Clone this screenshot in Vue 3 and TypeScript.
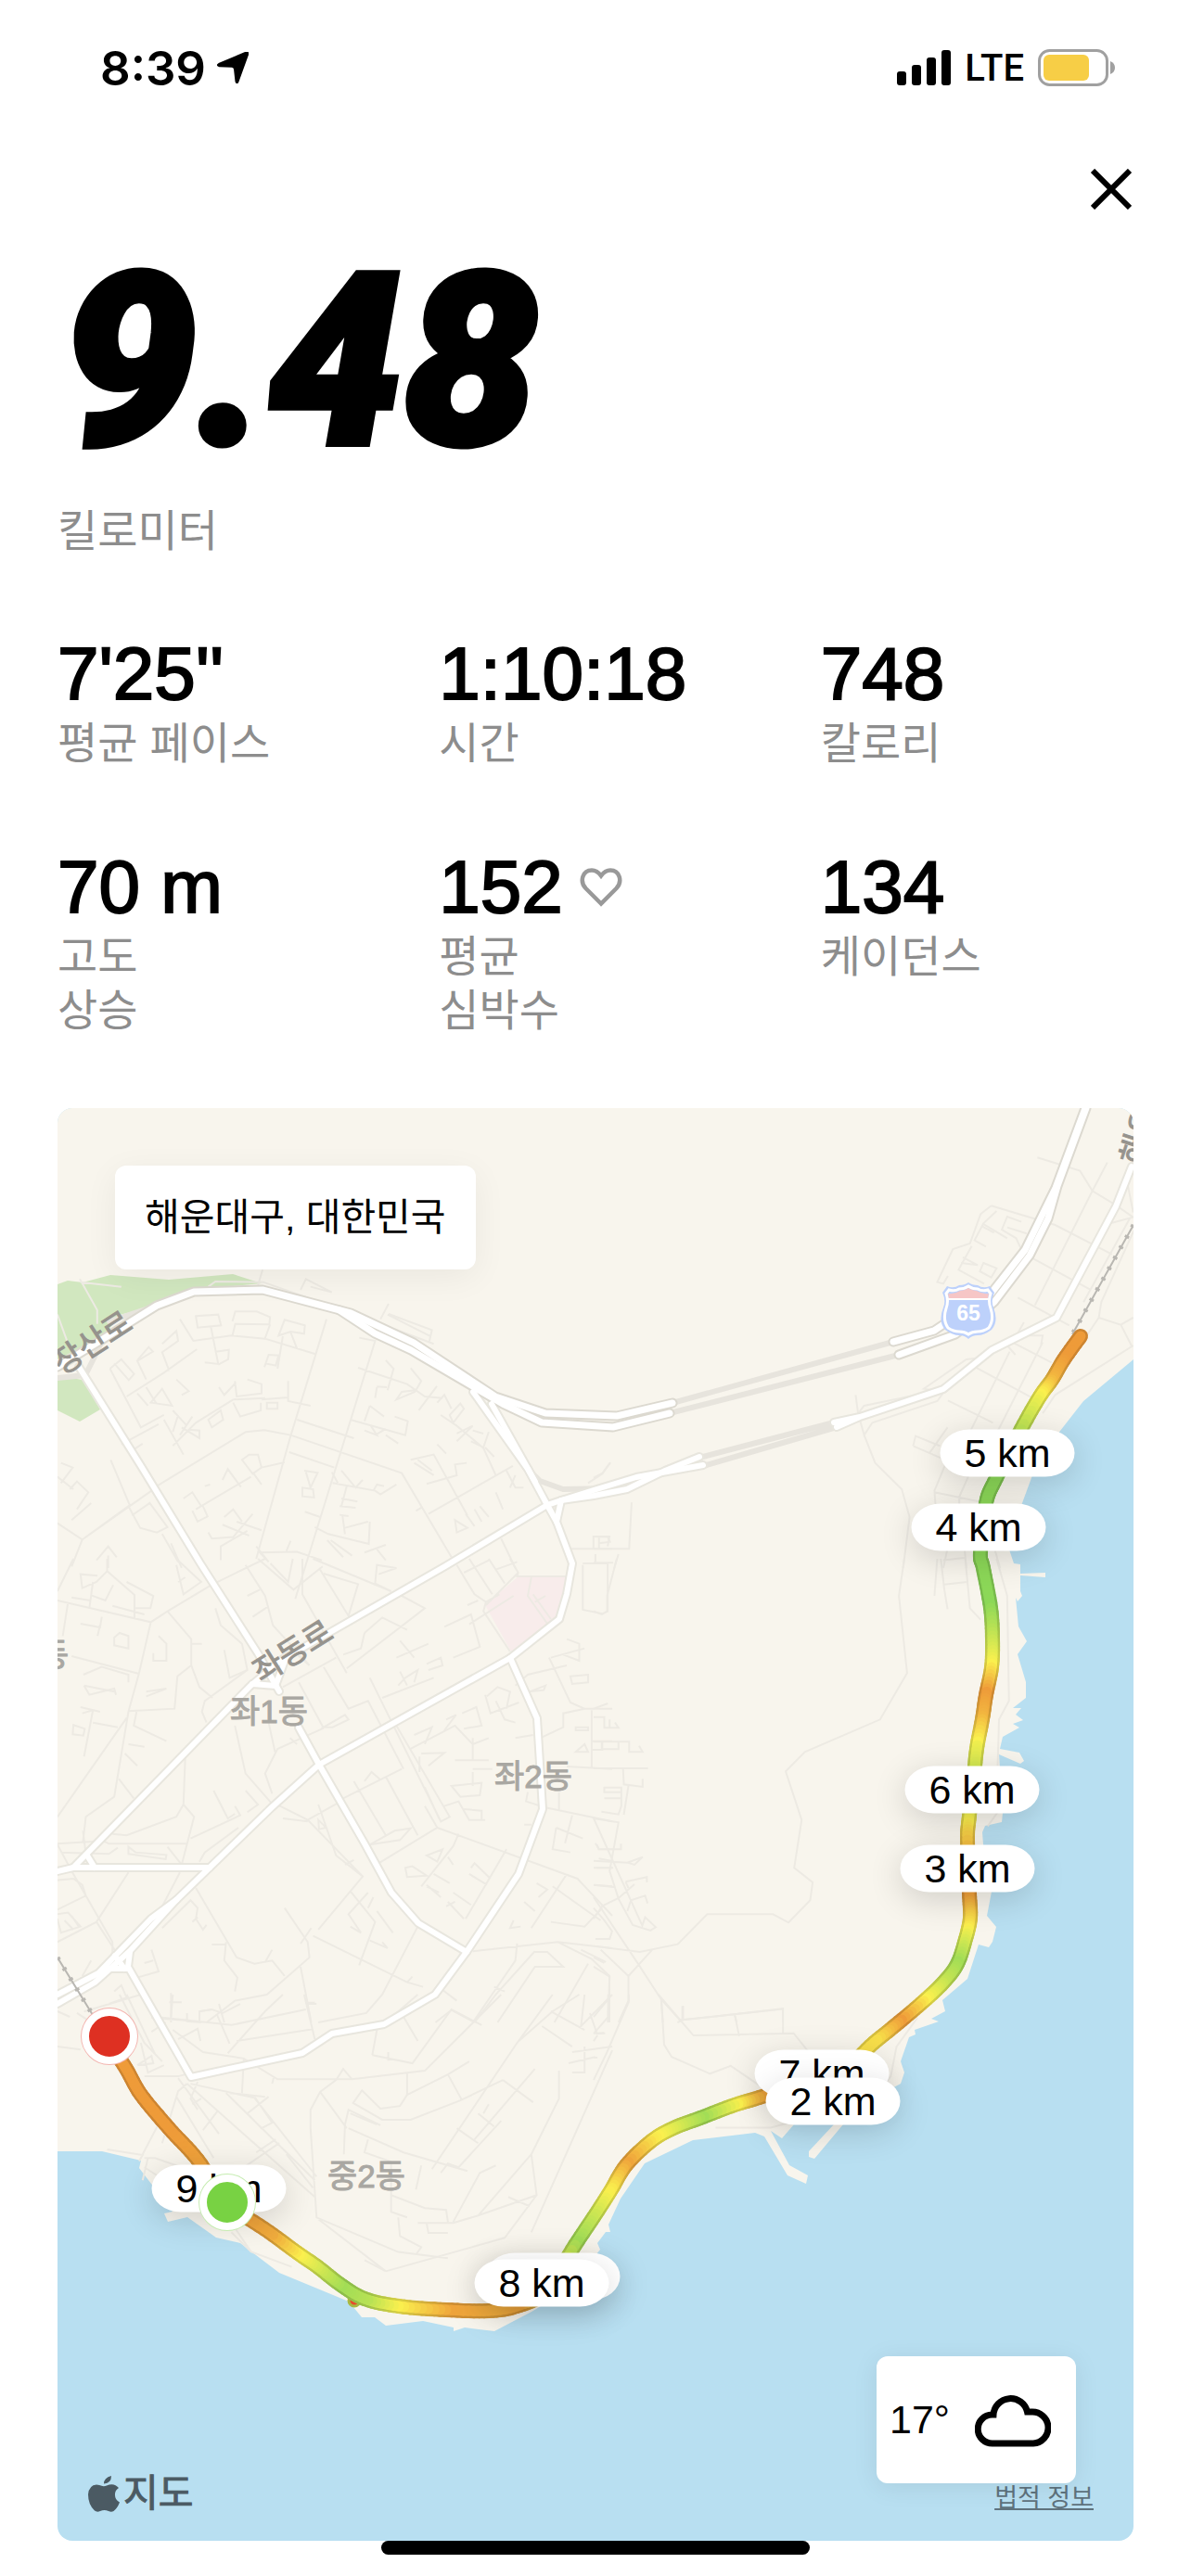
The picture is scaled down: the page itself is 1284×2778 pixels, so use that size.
<script setup lang="ts">
interface Stat {
  value: string
  label: string
  heart?: boolean
}

interface Pin {
  label: string
  x: number
  y: number
}

const stats: Stat[] = [
  { value: "7'25''", label: '평균 페이스' },
  { value: '1:10:18', label: '시간' },
  { value: '748', label: '칼로리' },
  { value: '70 m', label: '고도\n상승' },
  { value: '152', label: '평균\n심박수', heart: true },
  { value: '134', label: '케이던스' },
]

// The map's own coordinate window
const view = { x: 62, y: 1194, w: 1160, h: 1545 }

const pins: Pin[] = [
  { label: '5 km', x: 1086, y: 1566 },
  { label: '4 km', x: 1055, y: 1646 },
  { label: '6 km', x: 1048, y: 1929 },
  { label: '3 km', x: 1043, y: 2014 },
  { label: '7 km', x: 886, y: 2235 },
  { label: '2 km', x: 898, y: 2265 },
  { label: '1 km', x: 596, y: 2454 },
  { label: '8 km', x: 584, y: 2461 },
  { label: '9 km', x: 236, y: 2359 },
]

function place(x: number, y: number) {
  return {
    left: `${((x - view.x) / view.w) * 100}%`,
    top: `${((y - view.y) / view.h) * 100}%`,
  }
}

// Route vertices: x, y, speed (0 slow, 1 medium, 2 fast)
const track: [number, number, number][] = [
  [1165, 1440, 0], [1147, 1465, 0], [1134, 1487, 0.3], [1121, 1505, 1], [1101, 1540, 1.5],
  [1074, 1593, 2], [1063, 1620, 2], [1057, 1673, 2], [1060, 1690, 2], [1068, 1733, 2],
  [1070, 1767, 1.5], [1069, 1797, 1], [1063, 1827, 0], [1059, 1853, 0.3], [1053, 1885, 1.1],
  [1050, 1915, 1.4], [1045, 1957, 1.2], [1043, 1983, 0.6], [1045, 2040, -0.1], [1046, 2067, 0.6],
  [1041, 2090, 1.2], [1032, 2117, 1.8], [1017, 2137, 1.5], [996, 2157, 1], [969, 2180, 0],
  [942, 2202, 0.8], [903, 2234, 0.8], [825, 2259, 0], [792, 2269, 1], [755, 2283, 1.8],
  [726, 2294, 1.3], [702, 2308, 0.9], [675, 2334, 0.1], [658, 2362, 0.9], [640, 2390, 1.4],
  [620, 2420, 1.8], [588, 2470, 0.8], [557, 2486, 0.1], [527, 2491, 0.2], [481, 2490, 0.1],
  [430, 2486, 0.9], [393, 2478, 1.6], [366, 2462, 1.8], [343, 2444, 1.4], [320, 2428, 1],
  [290, 2406, 0.2], [245, 2374, 0], [213, 2328, 0.1], [182, 2294, 0], [152, 2258, 0],
  [136, 2230, 0], [118, 2202, 0],
]

const ramp = [
  [238, 155, 57],
  [250, 240, 78],
  [140, 216, 88],
]

function speedColor(t: number, shade: number): string {
  const v = Math.min(2, Math.max(0, t))
  const i = Math.min(1, Math.floor(v))
  const f = v - i
  const c = ramp[i].map((a, k) => Math.round((a + (ramp[i + 1][k] - a) * f) * shade))
  return `rgb(${c.join(',')})`
}

function spline(a: number, b: number, c: number, d: number, t: number): number {
  return 0.5 * (2 * b + (c - a) * t + (2 * a - 5 * b + 4 * c - d) * t * t + (3 * b - a - 3 * c + d) * t * t * t)
}

const steps = 8
const points: [number, number, number][] = []
for (let i = 0; i < track.length - 1; i++) {
  const p0 = track[Math.max(0, i - 1)]
  const p1 = track[i]
  const p2 = track[i + 1]
  const p3 = track[Math.min(track.length - 1, i + 2)]
  for (let s = 0; s < steps; s++) {
    const t = s / steps
    points.push([
      spline(p0[0], p1[0], p2[0], p3[0], t),
      spline(p0[1], p1[1], p2[1], p3[1], t),
      p1[2] + (p2[2] - p1[2]) * t,
    ])
  }
}
points.push(track[track.length - 1])

const segments = points.slice(1).map((p, i) => ({
  x1: points[i][0].toFixed(1),
  y1: points[i][1].toFixed(1),
  x2: p[0].toFixed(1),
  y2: p[1].toFixed(1),
  core: speedColor(p[2], 1),
  edge: speedColor(p[2], 0.86),
}))

const coast =
  'M62 1194H1222V1465L1168 1510 1143 1542 1113 1590 1102 1620 1088 1670 1093 1685 1100 1686V1696L1127 1695V1700L1100 1698V1715L1102 1720 1097 1726 1095 1722 1098 1753 1107 1769 1097 1783 1106 1813V1830L1092 1841H1101L1095 1848 1103 1854 1092 1858 1099 1862 1081 1872 1078 1885 1099 1889 1104 1898 1100 1901 1077 1891 1081 1954 1080 1964 1062 1968 1059 1975 1060 1988 1069 2039 1064 2065 1074 2077 1070 2093 1066 2099 1055 2096 1043 2133 1016 2156 1019 2168 1004 2176 1012 2179 986 2188 987 2193 980 2196 971 2222 975 2234 971 2246 927 2270 909 2290 878 2327 872 2325V2319L899 2290 882 2280 856 2290 843 2305 831 2297 851 2334 871 2345 869 2354 849 2345 824 2303 814 2299 747 2307 695 2332 669 2370 656 2398 658 2406H653L644 2418 647 2425 610 2470 573 2492 533 2513 501 2509 489 2513V2509L456 2502 416 2507 404 2498H390L376 2481 301 2450 259 2418 233 2412 202 2390 181 2395 177 2386 186 2384 150 2337 152 2329 110 2319H62Z'

const tunnels = [
  'M725 1512L963 1446M722 1523L969 1460M899 1533L754 1571M902 1538L758 1580',
  'M573 1587L582 1596 607 1605 660 1604',
  'M62 1485L92 1482 104 1458 112 1440M118 1424L169 1407',
]

const highways = [
  'M62 1473L129 1432 169 1407 209 1392 283 1390 378 1415 446 1447 534 1505 588 1523 665 1526 725 1512',
  'M366 1412L404 1437 443 1455 542 1513 584 1533 661 1538 722 1523',
  'M963 1446L1007 1434 1040 1412 1069 1393 1105 1347 1138 1280 1170 1194',
  'M969 1460L1030 1438 1053 1420 1072 1403 1110 1353 1130 1313 1140 1278 1171 1194',
]

const roads = [
  'M1220 1257L1203 1300 1139 1420 1069 1455 1017 1497 927 1527 899 1533M927 1527L902 1538',
  'M754 1570L717 1585 676 1605 640 1612 605 1617 590 1622 480 1688 351 1762 305 1788 270 1817 79 2013 62 2017',
  'M758 1579L686 1592 640 1606 605 1617',
  'M85 1473L152 1580 216 1685 278 1782 301 1823M322 1862L344 1902 393 1987 422 2040 451 2073 503 2104',
  'M272 1815L297 1817 307 1790M94 2000L102 2013M79 2013H226',
  'M510 1500L569 1583 590 1622 600 1640 617 1685 611 1718 603 1745 550 1787 344 1902 293 1948 226 2013 190 2048 140 2103 102 2137 62 2160',
  'M530 1513L577 1597M605 1617L600 1640M190 2048L163 2068 106 2127 62 2150',
  'M550 1787L579 1852 585 1950 559 2020 503 2104 469 2150 414 2182 358 2192 326 2213 206 2239 138 2120 140 2104M118 2122H138M124 2108L134 2122',
]

// Side streets, drawn tile by tile; each tile has its own origin and scale
const tiles = [
  {
    transform: 'translate(60 1190) scale(.3827 .3333)',
    d: 'M153 855L185 825 221 872 206 892 165 838M153 855L240 1045 305 1005M200 945L305 868 398 792M350 695L388 765 495 748 590 758 732 808M395 685L458 680 466 715 400 722ZM437 718L458 840 420 835M450 800L488 794 486 825 458 842M498 702L506 670 566 670 604 688 602 712 506 710 498 748M604 712L590 756M628 748L645 697 702 715 700 742 662 735ZM662 738L680 790M300 775L340 733 345 765 300 802 320 862M230 828L262 785 274 800 230 830 255 890M763 695L660 1080 565 1470M855 755L900 765 675 1600M852 852L990 905 1040 945 1090 950M930 828L952 855 935 925M1000 853L1030 895 1012 930 960 955 975 930 1012 925M905 913L933 915M905 915L900 950M1074 912L1023 990M640 750L625 855M588 850L600 810 628 812 620 845 590 838M540 890L580 905V935L510 945 505 895M460 915L475 940 508 900M655 895V960L718 975M580 955L655 948M500 955L395 1030 330 1105M500 955L590 950M500 965L520 1010 578 990V965M595 965H625V985H595ZM430 1020L465 990 472 1020 440 1045ZM330 990L370 1040M345 1005L330 1060M385 1010L350 1070M355 1045L405 1080V1055L375 1052M305 1020L360 1133M230 935L260 975M255 915L285 970M300 920L328 975 268 965ZM340 890L375 928 355 940M185 1100L290 1035M222 1115L245 1098M285 1235L535 1060 588 1054 662 1070 975 1193 1115 1465M658 1125L785 1175M680 1020L840 1080M830 1020L985 1070 992 1025 955 1010M870 1055L905 1070 888 1040M900 1070L930 1050M885 975L870 1025M885 975L925 1010M965 1097L930 1070M1075 965L1095 940 1115 985M1110 1005L1140 968 1150 985 1120 1030ZM1085 1005L1130 1040 1205 1112 1240 1200M1130 1065L1175 1040 1130 1090M1205 1065L1175 1055M1210 1110L1235 1140M1000 1150L1065 1133 1160 1330M1010 1160L1065 1200M1020 1150L1060 1185M1075 1100L1100 1130M1045 1228L1130 1200 1125 1165 1158 1160M1050 1325L1288 1170M1270 1185L1295 1240H1318M1280 1240L1295 1200M1015 1315L1030 1305M1125 1345L1130 1385 1160 1370ZM1155 1325L1180 1365M1180 1310L1200 1350M1195 1300L1220 1335M1240 1255L1260 1310M525 1150L545 1133H570L580 1175 555 1195ZM555 1190L580 1230M580 1175L645 1158M470 1215L485 1180 522 1238M360 1275L385 1255 410 1300M395 1310L550 1205M385 1315L400 1350 428 1333 415 1300M420 1235L435 1230M700 1185L738 1192 718 1240 705 1190M695 1268V1240L725 1245 728 1272ZM780 1225L900 1250 915 1262 960 1230M778 1190L795 1225M805 1185L845 1240 865 1215M895 1250L905 1230 925 1235M820 1235L805 1300M805 1275L850 1285M800 1300L845 1305M702 1318L745 1335M800 1328L825 1332M808 1330L815 1390M815 1370L880 1350M730 1368L768 1390 882 1422 885 1350M765 1410L810 1465M775 1410L835 1460M870 1450L930 1425M905 1440L930 1475M430 1385L440 1405 500 1400 555 1325M470 1360L545 1395M475 1335L500 1310 525 1350M510 1350L580 1378M465 1475V1430L540 1380M5 1355L75 1408 270 1250M45 1495L75 1408 205 1300 238 1370 285 1385 315 1368 265 1290 215 1330M155 1150L210 1300M15 1160L48 1175 15 1225M5 1205L50 1245M40 1245L60 1220 92 1255 60 1310M45 1345L100 1290M115 1475L148 1430 172 1465M148 1460V1500M300 1390L345 1480M325 1420L355 1500M565 1430L600 1480 575 1450 680 1448 750 1475M650 1445L662 1412M430 590L450 573 585 575 870 690 1065 775M583 535L570 585M690 600L705 565 778 608 718 590M938 645L915 695M938 678L1060 730 1052 770M935 680L1055 750M68 565L117 665V710M70 575L185 590M5 680L40 790M1255 1405L1295 1500M1450 1438H1568M1515 1438V1398H1560L1555 1430M1500 1225L1540 1195 1562 1160M1220 1060L1205 1110 1170 1090',
  },
  {
    transform: 'translate(640 1190) scale(.3827 .3333)',
    d: 'M1250 172L1370 215 1405 280 1470 325 1520 365M1447 188L1405 280 1243 650M1195 625L1340 715M1120 328L1300 390 1460 485M1120 328L1090 355 1060 450 1012 468 968 575 985 580 998 555M1135 345L1098 385 1073 440 1105 460M1095 385L1165 433M1095 395L1128 415M1205 380L1165 363 1150 405 1190 433 1205 470M1165 398L1220 418M1065 458L1028 535 1100 580M1040 495L1082 520 1035 513M1098 513L1135 530 1120 560 1088 540ZM1235 497L1400 600M1505 262L1520 350M1455 385L1520 365M1525 400L1430 640 1423 690 1300 900M1510 370L1380 640M1423 690L1485 713 1520 690M1485 713L1515 780M1520 780L1300 940 1265 1000M1180 770L1290 835M1165 780L1188 810M1212 705L1190 750M1200 748H1265L1260 780M1075 850L1245 955M1172 800L1043 1100M1265 770L1115 1110M998 958L1125 1030M985 930L930 920 1050 825 1090 820M990 925L968 960 785 1030 762 1070 745 1000 762 975 930 935M738 940L745 1000M762 1070L793 1160 868 1245 890 1335 872 1500M900 1105L907 1073 975 1105M900 1105L980 1145M997 1045L945 1130M1000 1140L960 1250 970 1400M960 1255L1085 1285M1080 1140L1030 1270V1330M1000 1420L985 1500M1045 1440L1050 1500M985 1475L1045 1467M1130 1440L1145 1500M107 1288L100 1438H0M0 1398L40 1400 46 1415 15 1420M15 1398V1438M70 1455L58 1500M5 1455V1483M0 1483H55M0 1208L25 1193 47 1158',
  },
  {
    transform: 'translate(60 1680) scale(.3827 .3333)',
    d: 'M5 105L50 0M5 135L268 205 315 170 438 85 590 0M35 140L20 250M268 205L235 370 205 495 165 770 85 835 77 915M5 835L200 515M145 0V40L222 117V195M145 40L115 75 75 95 70 50 118 55M95 160L105 75M45 125L98 135M100 118L140 135 162 85M200 75L275 120 267 160H222M160 152L250 180M70 210L125 222 130 188M125 215L118 250M165 255L180 240 205 250V290L165 280ZM45 315L235 372M78 375L130 350 205 375V400M80 410L95 440 165 420 170 440M80 410L165 430M255 430L312 420 255 445M70 480L125 495M75 500L105 490 80 640M105 530L175 545M50 538L82 550 78 572 48 568ZM205 600L250 608M205 493L335 485 343 380 382 345 405 415 442 450M382 345V260L315 170M382 275H412M290 250L312 275V330H275V305M228 495L220 540 312 590M195 630L230 670M178 712L220 775M160 890L200 895 340 835 360 795 390 835 355 990M365 645L360 795M5 922L135 913 150 922H372M77 880L85 955M205 932V955L310 972 312 958 225 950ZM340 0L410 75 360 115 340 20M345 75L365 60M535 20L590 120 612 215 715 345M540 120L575 100M555 188L598 155M450 160L465 215 525 275 540 360 490 385 475 295M540 360L420 460 412 495 425 530M570 0L670 100 752 25M605 15L655 75 668 0M695 0V115L820 370M755 48L852 82 825 185 745 35M725 0L945 105 900 80 905 20 960 30 910 50M975 120L1040 160 820 355M970 265L1010 320M870 240L920 190 990 230M870 240L860 290 810 310M1095 220L1170 180 1195 285 1120 320M1165 212L1290 120M960 320L1050 275M1160 150L1190 135M1130 20L1180 115 1212 140 1250 115M1150 45L1220 5M1165 0L1230 115M1240 35L1300 10M1220 0L1265 80M1280 0L1303 45 1300 57H1438M1212 140L1205 170 1280 300M1212 150L1303 45M1340 60L1330 120 1385 210M1345 115L1395 195M1350 140L1380 120M1485 20V165L1540 178 1555 170V15H1485M640 415L790 320M660 290L715 345M755 350L825 485 880 460 980 680M885 385L1085 850 1110 835 960 540M685 400L755 548M755 545L815 505 825 520 780 545ZM755 548L625 615 590 695 610 760M505 540L535 695 615 800M600 530L618 625M660 580L680 600M870 720L890 690 915 715M810 775L975 680M840 720L930 895M930 705L1020 895M885 925L955 880 1000 872 970 910ZM910 985L1075 870 1040 800M740 795L790 960 862 1025M615 790L710 845 865 1028 740 1200M640 840L710 850M710 845L795 790M740 845L762 870 742 875ZM815 990L840 975M920 450L1065 385M965 410L985 385 1020 360 1010 400M970 365L990 410M1045 340L1085 320 1090 345 1050 360M1000 615L1125 540 1175 600 1220 580M1100 520L1128 505 1095 555M1150 550L1200 540 1185 480 1145 500M1175 580V650M1040 600L1060 545 1010 570M1030 630L1095 628 1050 670M1025 690V640M1125 652H1220M1115 735L1200 725 1195 765 1140 770ZM1175 690V735M1175 680H1230M1095 800L1135 785 1165 845H1210M1150 810L1200 815V845M1040 740L1080 840M1075 870L1470 1035 1568 1155M1135 890L1120 930 1030 1060M1270 940L1155 1165M1045 960L1090 940 1075 980ZM1105 965L1120 990M985 1000L1005 995 1045 1025 990 1030ZM1065 1020L1110 1050M1045 1055L1085 1095M1045 1060L1080 1080M1170 1000L1180 985 1225 1035M1165 1020L1215 1055M1120 1080L1170 1120M1105 1110L1150 1165M1100 1125L1125 1110M1215 445L1245 415 1280 430 1270 485M1210 440L1225 500 1305 465M1240 460L1265 520 1295 530M1295 580L1345 570M1295 410L1330 375 1440 345M1395 320L1490 290M1390 320L1450 465 1490 485H1568M1440 260L1475 275V330L1430 310M1450 380L1500 375V400L1455 405ZM1335 430L1380 410 1375 425ZM1365 580L1430 545V500L1490 485M1510 490V675M1465 545H1500V555H1465ZM1465 625L1490 600 1500 625ZM1510 590H1568M1510 618H1540V590M1440 672L1568 680M1380 805L1568 850M1330 755L1325 785 1380 805M1418 755V815M1410 870L1400 940 1450 950M1410 870L1485 905M1320 860H1340M1455 830L1435 920M1525 925L1530 940H1568M1530 970L1568 978M1525 1000H1568M1520 1055L1568 1060M1440 1020L1340 1195M1355 1050L1385 1070 1360 1095M1320 1110L1350 1140M1290 1170L1280 1195 1310 1190M1400 1060L1535 1170M1395 1175L1490 1190 1540 1130M1175 1270L1415 1240 1568 1260M1415 1240L1510 1295 1560 1350V1500M1300 1245L1295 1300 1175 1500M1235 1385L1265 1400M1350 1270L1240 1410 1180 1500M1350 1272H1385L1430 1320 1350 1320 1245 1500M1480 1265L1550 1305M1500 1310L1405 1500M1090 1395L1130 1430M1020 1190L920 1410 875 1470 740 1500M725 1220L990 1370 1035 1385M990 1370L1005 1352M645 1130L710 1240 715 1290 595 1410 505 1430 425 1500M720 1195L690 1245M690 1320L720 1500M710 1440H735M405 1500V1465L440 1458M830 1075L900 1175 855 1315M830 1190L860 1210 825 1150 880 1080M905 1140L950 1210M885 1235L935 1260 920 1240M880 1130L895 1095M395 1065L510 1290 560 1310 610 1300 645 1350M480 1240L475 1300 512 1355 505 1400M440 1248H480M590 1305L610 1265M300 1195L380 1105 400 1130 395 1165 415 1200 425 1185M385 1175L400 1160M5 1240L115 1175 205 1015M45 1010L160 1240V1280M115 1175L180 1290M5 1150L35 1145 70 1190 15 1210 5 1165M25 1170L50 1200M45 1155L65 1190M5 1040L50 1035 75 1055 85 1090 5 1135M350 1015L275 1180M405 980L420 950 515 870M380 905L520 830 505 800M445 750L485 840 505 825M535 750L570 795 540 820M5 925L45 1010M15 950L150 955 175 935M315 932L355 990M230 1355L290 1335 270 1265M250 1308L275 1300M165 1400L185 1380 200 1420 150 1440M80 1465L240 1410M325 1405V1500M320 1435H355M460 1440L475 1500M270 1485L380 1495M60 1470L100 1500M75 1350L100 1300M1070 1500L1115 1460 1180 1500',
  },
  {
    transform: 'translate(640 1680) scale(.3827 .3333)',
    d: 'M875 0L860 120 883 370 807 520 595 625 541 688 586 845 565 1000 617 1047 610 1105 549 1177 505 1150H320L237 1247 130 1272 0 1253M968 0L960 120M978 0L988 100 997 163M1047 0L1060 160 1090 197M988 83L1052 75M1135 0L1165 120 1170 460 1142 520 1138 670M65 0L38 120V170L23 180 0 170M0 485L40 468M0 512H30V547H70L60 530M45 520V547M0 592H100V625H138L128 605M23 592V616H70V595M0 678H153M83 680L85 730 138 738V712M98 735L85 828M30 740H78V755H30ZM78 755V800L70 827 22 818M30 775H78M0 840L70 853 45 1010 70 1100 110 1185 160 1203 175 1192 145 1160 137 1187ZM5 920L15 940H77V922M0 977L95 983 138 965 115 990 95 983M0 1000H55M0 1055L62 1063M70 1098L25 1123 0 1165M70 1098L115 1053M90 1045L98 1065M90 1045L150 1030V1047M95 1140L105 1105 145 1090 152 1115M0 1095L125 1310 190 1425 245 1495M0 1130L30 1170 52 1205 45 1230H5M20 1265L98 1350 165 1265M98 1350V1430L70 1500M0 1320L45 1352 40 1500M0 1290L30 1308M190 1425L195 1500M240 1493L533 1457V1500M250 1447V1493M397 1475L403 1500M1110 865L1138 820',
  },
  {
    transform: 'translate(60 2150) scale(.3827 .4005)',
    d: 'M300 62L495 82 705 40M270 100L310 75M345 120L400 92 408 125M330 95L415 155 530 172 625 228H835L1040 205 1255 0M455 55L490 132M510 125L725 93M485 158L590 45 640 0M700 0L730 120M705 22H730M892 163L905 95 1020 0M892 163L1005 185 1115 40 1200 82M980 60L1020 125M937 155V178M835 228L810 200 790 230 745 262 718 310V360L735 600 965 693 1105 710M530 172L525 265M615 220L610 240M990 210V270L1105 215 1165 180M990 270L970 300 915 307 863 258 838 292 920 337H1000L1140 285 1205 255 1260 230M1105 215L1145 285M815 350L825 310 915 352M830 320L905 350M815 350L812 430M825 360L980 425 1160 475M745 262L820 360M880 390L870 425 945 450V585L990 600M945 540L1040 575 1100 580 1105 612M965 600L970 650 1030 680 1015 700M1020 615H1120L1190 595 1355 540 1340 430 1418 280V205M1045 615L1050 642H1105M930 745L1265 655 1355 540M870 715L930 745 740 605M1060 470L1300 130 1400 0M1180 390L1350 200M1260 230L1345 290M1190 320L1235 355M1130 360L1190 400M1030 460L1015 525M1085 480L1105 455 1135 465 1255 340M1275 545L1335 570M1120 612L1195 480 1240 460M1340 430L1190 595M1305 125L1400 45 1475 0M1395 45L1490 95M1370 85L1455 140M1490 0L1480 85 1568 0M1455 155L1568 140M1455 210H1490V140M1505 50L1525 105 1545 103M1445 185L1520 168M1205 320L1220 295M1568 150L1340 640M370 240L730 545M345 225L460 375M400 235L380 280 400 310M410 280L385 295M480 265L730 500M560 275L610 345 580 360 540 320 600 275M455 315L415 365M565 425L620 390M515 475L630 400M650 430L725 520M340 275L445 440M380 240L560 278 735 490M490 265L590 275M300 400L345 260 370 240M245 430L300 330M145 417L245 432 235 448M250 440L280 440 400 480 550 692 665 733M250 465L420 570M245 500L260 440M495 640L550 692M250 220H345L385 210M230 190L270 165 275 185 235 190M180 0L250 130 300 180M200 0L280 160M330 0L325 60M5 140L70 148M5 45L40 60M240 130L260 210 305 190M405 72V45L440 40 470 50 520 25M370 50V72L410 75',
  },
  {
    transform: 'translate(640 2150) scale(.4107 .4005)',
    d: 'M178 15L185 135 205 168 305 213 360 192 440 248 470 300M170 0L262 110 525 104 600 200M220 75L235 68 497 38V104M235 30V68M370 52L382 112M38 0V60L0 105M92 0V20L35 155 0 230M0 104H30M0 125L10 110M0 170H10M850 62L795 140 780 220 750 260M320 358H465L530 340M0 60L40 10',
  },
]
</script>

<template>
  <div class="screen">
    <header class="status">
      <div class="clock">
        <span>8:39</span>
        <svg class="arrow" viewBox="0 0 34 34" aria-hidden="true">
          <path
            d="M30.500 1Q34 -.500 33 3L22.500 32Q21.500 34.500 20.500 32L19 18.500Q18.500 16 16 15.800L2.500 15.200Q-.500 14.500 2 13Z"
            stroke="#000" stroke-width="2" stroke-linejoin="round" />
        </svg>
      </div>
      <div class="signals">
        <svg class="bars" viewBox="0 0 58 38" aria-hidden="true">
          <rect x="0" y="23" width="10" height="15" rx="3" />
          <rect x="16" y="16" width="10" height="22" rx="3" />
          <rect x="32" y="8" width="10" height="30" rx="3" />
          <rect x="48" y="0" width="10" height="38" rx="3" />
        </svg>
        <span class="network">LTE</span>
        <svg class="battery" viewBox="0 0 83 40" aria-hidden="true">
          <rect x="1.500" y="1.500" width="73" height="37" rx="11" fill="#fff" stroke="#a0a0a0" stroke-width="3" />
          <rect x="6" y="6" width="49" height="28" rx="6" fill="#f7ce46" />
          <path d="M78 13Q83 15 83 20T78 27Z" fill="#a0a0a0" />
        </svg>
      </div>
    </header>

    <main>
      <div class="toolbar">
        <button class="close" type="button" aria-label="닫기">
          <svg viewBox="0 0 44 44" aria-hidden="true">
            <path d="M2 2L42 42M42 2L2 42" stroke="#000" stroke-width="6" />
          </svg>
        </button>
      </div>

      <h1 class="distance">9.48</h1>
      <p class="unit">킬로미터</p>

      <dl class="stats">
        <div v-for="s in stats" :key="s.label" class="stat">
          <dt>{{ s.label }}</dt>
          <dd>
            {{ s.value }}
            <svg v-if="s.heart" class="heart" viewBox="0 0 46 42" aria-hidden="true">
              <path
                d="M23 38.500L6.500 22C-.500 14.500 3 2.500 13 2.500C17.500 2.500 20.500 5 23 8.500C25.500 5 28.500 2.500 33 2.500C43 2.500 46.500 14.500 39.500 22Z"
                fill="none" stroke="#999" stroke-width="4.500" />
            </svg>
          </dd>
        </div>
      </dl>

      <section class="map" aria-label="지도">
        <svg class="canvas" :viewBox="`${view.x} ${view.y} ${view.w} ${view.h}`">
          <path :d="coast" fill="#f8f5ed" />
          <path
            d="M62 1384L73 1380 89 1382 119 1374 182 1379 251 1373 282 1383 209 1390 169 1407 129 1417 112 1440 62 1465ZM62 1520L86 1532 108 1519 89 1487 71 1484 62 1488Z"
            fill="#d1e7bf" />
          <path d="M559 1699H610L611 1717 601 1745 551 1780 523 1730Z" fill="#f8eceb" />

          <g class="streets">
            <path v-for="(t, i) in tiles" :key="i" :d="t.d" :transform="t.transform" />
          </g>
          <g class="lines tunnel">
            <path v-for="d in tunnels" :key="d" :d="d" />
          </g>
          <g class="lines road-casing">
            <path v-for="d in roads" :key="d" :d="d" />
          </g>
          <g class="lines highway-casing">
            <path v-for="d in highways" :key="d" :d="d" />
          </g>
          <g class="lines road">
            <path v-for="d in roads" :key="d" :d="d" />
          </g>
          <g class="lines highway">
            <path v-for="d in highways" :key="d" :d="d" />
          </g>
          <g class="rail">
            <path d="M1222 1320L1156 1438M62 2110L100 2172" />
            <path class="ties" d="M1222 1320L1156 1438M62 2110L100 2172" />
          </g>

          <g class="road-name">
            <text transform="translate(106 1457) rotate(-33)">장산로</text>
            <text transform="translate(322 1790) rotate(-32)">좌동로</text>
            <text transform="translate(1244 1212) rotate(-72)">해운대</text>
          </g>
          <g class="district">
            <text x="290" y="1857">좌1동</text>
            <text x="575" y="1927">좌2동</text>
            <text x="395" y="2358">중2동</text>
            <text x="58" y="1796">동</text>
          </g>

          <g transform="translate(1015 1382)">
            <path
              d="M6 4Q13 7 19 3Q25 3 29 0Q33 3 39 3Q45 7 52 4L57 11Q53 19 56 27Q62 42 54 51Q46 57 39 57Q33 57 29 61Q25 57 19 57Q12 57 4 51Q-4 42 2 27Q5 19 1 11Z"
              fill="#bdd1fb" />
            <path
              d="M8 8Q14 10 19 7Q25 7 29 4Q33 7 39 7Q44 10 50 8L53 12Q50 20 53 28Q57 40 51 49Q45 53 39 53Q33 53 29 56Q25 53 19 53Q13 53 7 49Q1 40 5 28Q8 20 5 12Z"
              fill="#bdd1fb" stroke="#fff" stroke-width="3" />
            <path d="M7 12Q14 13 20 9Q25 9 29 6Q33 9 38 9Q44 13 51 12L50 17H8Z" fill="#f6c6c6" />
            <path d="M7 18H51" stroke="#fff" stroke-width="2" />
            <text class="shield" x="29" y="41">65</text>
          </g>

          <circle cx="382" cy="2480" r="6" fill="#e8492c" stroke="#a9b842" stroke-width="3" />
          <g class="edge">
            <line v-for="(s, i) in segments" :key="i" :x1="s.x1" :y1="s.y1" :x2="s.x2" :y2="s.y2" :stroke="s.edge" />
          </g>
          <g class="core">
            <line v-for="(s, i) in segments" :key="i" :x1="s.x1" :y1="s.y1" :x2="s.x2" :y2="s.y2" :stroke="s.core" />
          </g>
        </svg>

        <span v-for="p in pins" :key="p.label" class="pin" :style="place(p.x, p.y)">{{ p.label }}</span>
        <span class="marker finish" :style="place(118, 2195)"></span>
        <span class="marker start" :style="place(245, 2374)"></span>

        <div class="place">해운대구, 대한민국</div>

        <div class="brand">
          <svg viewBox="0 0 34 40" aria-hidden="true">
            <path
              d="M25 1Q25 9 17 9.500Q17 3 25 1ZM33 14Q28.500 17 29 22Q29 27 34 29.500Q31.500 36 27.500 39Q25 40.500 22 39Q17.500 37 13 39Q9.500 40.500 7 38.500Q0 32 0 21Q1 11 9 10.500Q12 10.500 15.500 12Q17.500 12.500 20 11.500Q28 8 33 14Z" />
          </svg>
          <span>지도</span>
        </div>
        <a class="legal" href="#">법적 정보</a>
        <div class="weather">
          <span>17°</span>
          <svg viewBox="0 0 82 58" aria-hidden="true">
            <path
              d="M19 54A15.500 15.500 0 0 1 18.500 23H20A18.500 18.500 0 0 1 56.500 20H61A17 17 0 0 1 63 54Z"
              fill="none" stroke="#000" stroke-width="7" />
          </svg>
        </div>
      </section>
    </main>

    <div class="home-indicator"></div>
  </div>
</template>

<style>
body {
  background: #fff;
}
</style>

<style scoped>
.screen {
  box-sizing: border-box;
  padding-bottom: 24px;
  background: #fff;
  color: #000;
  font-family: "Liberation Sans", "Noto Sans CJK KR", sans-serif;
}

.status {
  display: flex;
  justify-content: space-between;
  align-items: center;
  height: 66px;
  padding: 40px 82px 66px 108px;
  font-family: Inter, sans-serif;
}

.clock {
  display: flex;
  align-items: center;
  gap: 12px;
  font-size: 51px;
  font-weight: 600;
}

.arrow {
  width: 34px;
  height: 34px;
}

.signals {
  display: flex;
  align-items: center;
  gap: 15px;
}

.bars {
  width: 58px;
  height: 38px;
}

.network {
  font-family: Roboto, sans-serif;
  font-size: 40px;
  font-weight: 500;
}

.battery {
  width: 83px;
  height: 40px;
}

main {
  padding: 0 62px;
}

.toolbar {
  display: flex;
  justify-content: flex-end;
}

.close {
  width: 64px;
  height: 64px;
  margin-right: -8px;
  padding: 10px;
  border: 0;
  background: none;
}

.close svg {
  display: block;
  width: 44px;
  height: 44px;
}

.distance {
  margin: 22px 0 22px 4px;
  font-family: Roboto, sans-serif;
  font-size: 260px;
  font-style: italic;
  font-weight: 900;
  line-height: 264px;
  -webkit-text-stroke: 6px #000;
}

.unit {
  margin: 0;
  color: #8d8d8d;
  font-size: 47px;
  line-height: 58px;
}

.stats {
  display: grid;
  grid-template-columns: repeat(3, 1fr);
  gap: 86px 74px;
  margin: 85px 0 76px;
}

.stat {
  display: flex;
  flex-direction: column-reverse;
  justify-content: flex-end;
  gap: 6px;
}

.stat dt {
  color: #8d8d8d;
  font-size: 47px;
  line-height: 58px;
  white-space: pre-line;
}

.stat dd {
  display: flex;
  align-items: center;
  gap: 18px;
  margin: 0;
  font-size: 80px;
  line-height: 80px;
  white-space: nowrap;
  -webkit-text-stroke: 2px #000;
}

.heart {
  width: 46px;
  height: 42px;
}

.map {
  position: relative;
  overflow: hidden;
  border-radius: 16px;
  background: #b8dff1;
}

.canvas {
  display: block;
  width: 100%;
  height: auto;
}

.streets path {
  fill: none;
  stroke: #edeae3;
  stroke-width: 2px;
  vector-effect: non-scaling-stroke;
}

.lines {
  fill: none;
  stroke-linecap: round;
  stroke-linejoin: round;
}

.tunnel {
  stroke: #e7e4dd;
  stroke-width: 6px;
}

.road-casing {
  stroke: #e8e6de;
  stroke-width: 10px;
}

.highway-casing {
  stroke: #dcd9d0;
  stroke-width: 11px;
}

.road {
  stroke: #fff;
  stroke-width: 6px;
}

.highway {
  stroke: #fff;
  stroke-width: 7px;
}

.rail path {
  fill: none;
  stroke: #b9b7b2;
  stroke-width: 2px;
}

.rail .ties {
  stroke-width: 5px;
  stroke-dasharray: 3px 10px;
}

.road-name text,
.district text,
.shield {
  text-anchor: middle;
}

.road-name text {
  fill: #96938d;
  stroke: #96938d;
  stroke-width: 1px;
  font-size: 34px;
}

.district text {
  fill: #a9a7a2;
  stroke: #a9a7a2;
  stroke-width: 1px;
  font-size: 35px;
}

.shield {
  fill: #fff;
  font-size: 23px;
  font-weight: 700;
}

.edge line {
  stroke-width: 16px;
  stroke-linecap: round;
}

.core line {
  stroke-width: 11px;
  stroke-linecap: round;
}

.pin {
  position: absolute;
  width: 145px;
  border-radius: 32px / 26px;
  background: #fff;
  box-shadow: 0 8px 36px rgba(0, 0, 0, 0.16);
  font-size: 43px;
  line-height: 51px;
  text-align: center;
  transform: translate(-50%, -50%);
}

.marker {
  position: absolute;
  box-sizing: border-box;
  width: 60px;
  height: 60px;
  border: 8px solid #fff;
  border-radius: 50%;
  transform: translate(-50%, -50%);
}

.finish {
  background: #de3022;
  box-shadow: 0 0 0 1px #f3b4af;
}

.start {
  background: #78d243;
  box-shadow: 0 0 0 1px #c5ecb0;
}

.place {
  position: absolute;
  top: 62px;
  left: 62px;
  padding: 26px 32px;
  border-radius: 12px;
  background: #fff;
  box-shadow: 0 8px 36px rgba(0, 0, 0, 0.06);
  font-size: 41px;
  line-height: 60px;
}

.brand {
  position: absolute;
  bottom: 27px;
  left: 33px;
  display: flex;
  align-items: center;
  gap: 4px;
  color: #4b5a63;
  font-size: 41px;
  line-height: 48px;
  -webkit-text-stroke: 1px #4b5a63;
}

.brand svg {
  width: 34px;
  height: 40px;
  fill: currentColor;
}

.legal {
  position: absolute;
  right: 43px;
  bottom: 28px;
  color: #5e727d;
  font-size: 27px;
  line-height: 36px;
}

.weather {
  position: absolute;
  right: 62px;
  bottom: 62px;
  display: flex;
  justify-content: space-between;
  align-items: center;
  box-sizing: border-box;
  width: 215px;
  height: 137px;
  padding: 0 27px 0 14px;
  border-radius: 12px;
  background: #fff;
  box-shadow: 0 4px 28px rgba(0, 0, 0, 0.08);
  font-size: 43px;
}

.weather svg {
  width: 82px;
  height: 58px;
}

.home-indicator {
  width: 36%;
  height: 15px;
  margin: 0 auto;
  border-radius: 8px;
  background: #000;
}
</style>
